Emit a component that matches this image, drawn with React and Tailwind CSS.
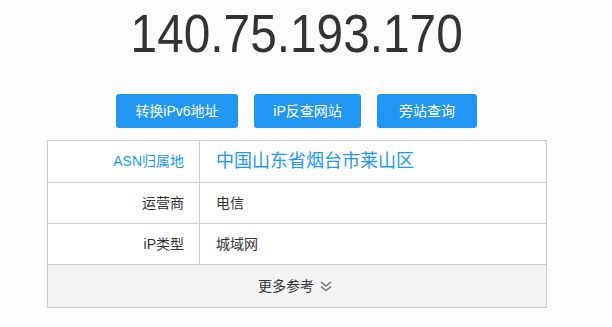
const font = { fontFamily: '"Liberation Sans", "Noto Sans CJK SC", sans-serif' };

const rows = [
  { label: "ASN归属地", value: "中国山东省烟台市莱山区", blue: true, h: "h-[42px]" },
  { label: "运营商", value: "电信", h: "h-[41px]" },
  { label: "iP类型", value: "城域网", h: "h-[41px]" },
];

function DoubleDown() {
  return (
    <svg width="12" height="11" viewBox="0 0 12 11" fill="none" stroke="#777" strokeWidth="1.5">
      <path d="M1 1 L6 5 L11 1" />
      <path d="M1 5.5 L6 9.5 L11 5.5" />
    </svg>
  );
}

export default function App() {
  return (
    <div className="w-[612px] h-[327px] bg-[#fcfcfc] overflow-hidden text-[#333]" style={font}>
      <div className="w-[500px] ml-[47px]">
        {/* 标题 IP */}
        <div className="pt-[6px] flex justify-center">
          <h1 className="text-[54px] leading-[54px] font-normal scale-x-[0.885] whitespace-nowrap">140.75.193.170</h1>
        </div>

        {/* 按钮 */}
        <div className="mt-[34px] flex justify-center gap-4 ml-[-1px]">
          <button className="w-[122px] h-[34px] rounded-[3px] bg-[#2196f3] text-white text-[14px]">转换iPv6地址</button>
          <button className="w-[107px] h-[34px] rounded-[3px] bg-[#2196f3] text-white text-[14px]">iP反查网站</button>
          <button className="w-[100px] h-[34px] rounded-[3px] bg-[#2196f3] text-white text-[14px]">旁站查询</button>
        </div>

        {/* 表格 */}
        <div className="mt-[12px] border border-[#ccc] bg-white">
          {rows.map((r) => (
            <div key={r.label} className={`grid grid-cols-[152px_1fr] border-b border-[#ccc] ${r.h}`}>
              <div className={`flex items-center justify-end pr-[15px] border-r border-[#ccc] text-[14px] ${r.blue ? "text-[#2196f3]" : ""}`}>
                {r.label}
              </div>
              <div className={`flex items-center pl-[16px] ${r.blue ? "text-[18px] text-[#2196f3]" : "text-[14px]"}`}>
                {r.value}
              </div>
            </div>
          ))}
          <div className="h-[42px] bg-[#f4f4f4] flex items-center justify-center gap-[6px] text-[14px] pr-[4px]">
            <span>更多参考</span>
            <DoubleDown />
          </div>
        </div>
      </div>
    </div>
  );
}
